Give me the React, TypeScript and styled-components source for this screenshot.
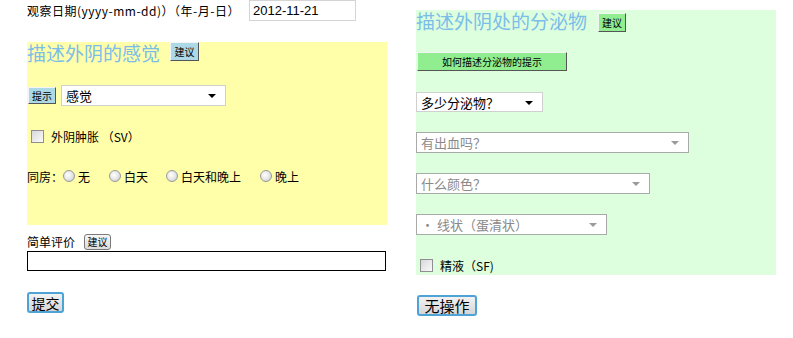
import styled, { createGlobalStyle } from "styled-components";

const GlobalStyle = createGlobalStyle`
  body {
    margin: 0;
    background: #fff;
    font-family: "Liberation Sans", "Noto Sans CJK SC", sans-serif;
    font-size: 12px;
    color: #000;
  }
`;

const Page = styled.div`
  display: flex;
  align-items: flex-start;
  gap: 29px;
  padding-left: 27px;
`;

const Column = styled.div`
  width: 360px;
  display: flex;
  flex-direction: column;
`;

const DateRow = styled.div`
  display: flex;
  align-items: center;
  height: 21px;
`;

const DateLabel = styled.span`
  width: 222px;
  font-size: 12px;
  white-space: nowrap;
  letter-spacing: 0.5px;
`;

const DateInput = styled.input`
  box-sizing: border-box;
  width: 107px;
  height: 21px;
  margin: 0;
  padding: 0 3px;
  border: 1px solid #d4d4d4;
  font-family: "Liberation Sans", sans-serif;
  font-size: 13px;
  color: #000;
  outline: none;
`;

const Panel = styled.div<{ $bg: string; $top: number; $height: number }>`
  display: flex;
  flex-direction: column;
  margin-top: ${(p) => p.$top}px;
  height: ${(p) => p.$height}px;
  background: ${(p) => p.$bg};
`;

const TitleRow = styled.div`
  display: flex;
  align-items: flex-start;
  height: 22px;
`;

const Title = styled.h3`
  margin: 0;
  font-size: 19px;
  line-height: 22px;
  font-weight: normal;
  color: #7bbde8;
  white-space: nowrap;
  font-family: "Noto Sans CJK SC", sans-serif;
`;

const FlatButton = styled.button<{ $bg: string; $w: number; $h: number; $mt?: number; $ml?: number }>`
  box-sizing: border-box;
  width: ${(p) => p.$w}px;
  height: ${(p) => p.$h}px;
  margin: ${(p) => p.$mt ?? 0}px 0 0 ${(p) => p.$ml ?? 0}px;
  padding: 0;
  background: ${(p) => p.$bg};
  border: 1px solid;
  border-color: #f4f4f4 #555 #555 #f4f4f4;
  font-family: "Noto Sans CJK SC", sans-serif;
  font-size: 10px;
  line-height: 1;
  color: #000;
  flex-shrink: 0;
`;

const GreyButton = styled.button<{ $w: number; $h: number; $size: number; $mt?: number; $ml?: number }>`
  box-sizing: border-box;
  width: ${(p) => p.$w}px;
  height: ${(p) => p.$h}px;
  margin: ${(p) => p.$mt ?? 0}px 0 0 ${(p) => p.$ml ?? 0}px;
  padding: 0;
  border: 1px solid #7a7a7a;
  border-radius: 3px;
  background: linear-gradient(#f6f6f6, #dcdcdc);
  font-family: "Noto Sans CJK SC", sans-serif;
  font-size: ${(p) => p.$size}px;
  line-height: 1;
  color: #000;
  flex-shrink: 0;
`;

const SubmitButton = styled(GreyButton)`
  border: 2px solid #4ea3d6;
  border-radius: 3px;
  background: linear-gradient(#f2f2f2, #d6d6d6);
`;

const Row = styled.div<{ $mt: number; $h: number; $gap?: number }>`
  display: flex;
  align-items: center;
  margin-top: ${(p) => p.$mt}px;
  height: ${(p) => p.$h}px;
  gap: ${(p) => p.$gap ?? 0}px;
  white-space: nowrap;
`;

const SelectWrap = styled.div<{ $w: number; $mt?: number; $disabled?: boolean }>`
  position: relative;
  box-sizing: border-box;
  width: ${(p) => p.$w}px;
  height: 21px;
  margin-top: ${(p) => p.$mt ?? 0}px;
  border: 1px solid ${(p) => (p.$disabled ? "#a9a9a9" : "#d0d0d0")};
  background: #fff;
  display: flex;
  align-items: center;
  padding-left: 4px;
  font-family: "Noto Sans CJK SC", sans-serif;
  font-size: 13px;
  color: ${(p) => (p.$disabled ? "#8a8a8a" : "#000")};
  flex-shrink: 0;
`;

const Arrow = styled.span<{ $disabled?: boolean }>`
  position: absolute;
  right: 9px;
  top: 8px;
  width: 0;
  height: 0;
  border-left: 4px solid transparent;
  border-right: 4px solid transparent;
  border-top: 4px solid ${(p) => (p.$disabled ? "#9a9a9a" : "#000")};
`;

const CheckBox = styled.span`
  box-sizing: border-box;
  display: inline-block;
  width: 13px;
  height: 13px;
  margin-left: 4px;
  border: 1px solid #8f8f8f;
  background: linear-gradient(135deg, #d8d8d8, #fbfbfb);
  flex-shrink: 0;
`;

const Radio = styled.span`
  box-sizing: border-box;
  display: inline-block;
  width: 12px;
  height: 12px;
  border-radius: 50%;
  border: 1px solid #9a9a9a;
  background: radial-gradient(circle at 40% 40%, #fff 0, #e4e4e4 55%, #bdbdbd 100%);
  flex-shrink: 0;
`;

const Label = styled.span<{ $ml?: number; $size?: number }>`
  margin-left: ${(p) => p.$ml ?? 0}px;
  font-family: "Noto Sans CJK SC", sans-serif;
  font-size: ${(p) => p.$size ?? 12}px;
`;

const RadioItem = styled.label<{ $ml: number }>`
  display: flex;
  align-items: center;
  gap: 3px;
  margin-left: ${(p) => p.$ml}px;
`;

const TextBox = styled.input`
  box-sizing: border-box;
  width: 359px;
  height: 20px;
  margin: 1px 0 0;
  border: 1px solid #000;
  padding: 0 2px;
  outline: none;
`;

const radios = [
  { text: "无", ml: 0 },
  { text: "白天", ml: 19 },
  { text: "白天和晚上", ml: 18 },
  { text: "晚上", ml: 19 },
];

export default function App() {
  return (
    <>
      <GlobalStyle />
      <Page>
        <Column>
          <DateRow>
            <DateLabel>
              <Label>观察日期(yyyy-mm-dd)）（年-月-日）</Label>
            </DateLabel>
            <DateInput defaultValue="2012-11-21" />
          </DateRow>

          <Panel $bg="#ffffaa" $top={21} $height={183}>
            <TitleRow>
              <Title>描述外阴的感觉</Title>
              <FlatButton $bg="#add8e6" $w={29} $h={19} $ml={10}>建议</FlatButton>
            </TitleRow>
            <Row $mt={21} $h={21} $gap={5}>
              <FlatButton $bg="#add8e6" $w={28} $h={17} $ml={1}>提示</FlatButton>
              <SelectWrap $w={165}>
                感觉
                <Arrow />
              </SelectWrap>
            </Row>
            <Row $mt={20} $h={20}>
              <CheckBox />
              <Label $ml={7}>外阴肿胀 （SV）</Label>
            </Row>
            <Row $mt={20} $h={20}>
              <Label>同房：</Label>
              {radios.map((r) => (
                <RadioItem key={r.text} $ml={r.ml}>
                  <Radio />
                  <Label>{r.text}</Label>
                </RadioItem>
              ))}
            </Row>
          </Panel>

          <Row $mt={8} $h={17} $gap={9}>
            <Label $size={12}>简单评价</Label>
            <GreyButton $w={27} $h={16} $size={10}>建议</GreyButton>
          </Row>
          <TextBox />
          <SubmitButton $w={37} $h={21} $size={14} $mt={21}>提交</SubmitButton>
        </Column>

        <Column>
          <Panel $bg="#ddffdd" $top={10} $height={265}>
            <TitleRow>
              <Title>描述外阴处的分泌物</Title>
              <FlatButton $bg="#90ee90" $w={28} $h={19} $ml={11} $mt={3}>建议</FlatButton>
            </TitleRow>
            <FlatButton $bg="#90ee90" $w={150} $h={19} $ml={1} $mt={20}>如何描述分泌物的提示</FlatButton>
            <SelectWrap $w={127} $mt={21} style={{ height: 20 }}>
              多少分泌物？
              <Arrow />
            </SelectWrap>
            <SelectWrap $w={273} $mt={20} $disabled>
              有出血吗？
              <Arrow $disabled />
            </SelectWrap>
            <SelectWrap $w={234} $mt={20} $disabled>
              什么颜色？
              <Arrow $disabled />
            </SelectWrap>
            <SelectWrap $w={191} $mt={20} $disabled>
              • 线状（蛋清状）
              <Arrow $disabled />
            </SelectWrap>
            <Row $mt={20} $h={20}>
              <CheckBox />
              <Label $ml={7}>精液（SF)</Label>
            </Row>
          </Panel>
          <SubmitButton $w={60} $h={21} $size={15} $mt={20} style={{ marginLeft: 1 }}>无操作</SubmitButton>
        </Column>
      </Page>
    </>
  );
}
